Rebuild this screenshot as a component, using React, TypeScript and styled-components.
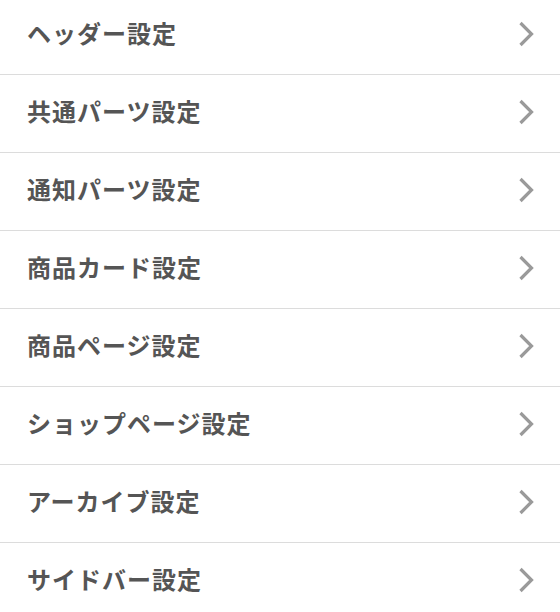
import React from 'react'
import styled, { createGlobalStyle } from 'styled-components'

const GlobalStyle = createGlobalStyle`
  html, body {
    margin: 0;
    padding: 0;
    background: #fff;
  }
  body {
    font-family: "Noto Sans CJK JP", "Noto Sans", sans-serif;
  }
`

const items = [
  'ヘッダー設定',
  '共通パーツ設定',
  '通知パーツ設定',
  '商品カード設定',
  '商品ページ設定',
  'ショップページ設定',
  'アーカイブ設定',
  'サイドバー設定',
]

const Menu = styled.ul`
  list-style: none;
  margin: -3px 0 0;
  padding: 0;
  width: 560px;
`

const Row = styled.li`
  display: flex;
  align-items: center;
  justify-content: space-between;
  height: 77px;
  padding: 0 26px 0 27px;
  border-bottom: 1px solid #dcdcdc;
  cursor: pointer;
`

const Label = styled.span`
  font-size: 24px;
  font-weight: 700;
  letter-spacing: 1px;
  color: #555;
  line-height: 1;
  margin-bottom: 6px;
`

const Arrow = styled.svg`
  display: block;
  margin-bottom: 3px;
`

const Chevron = () => (
  <Arrow width="16" height="26" viewBox="0 0 16 26" fill="none">
    <path d="M2.5 2 L13.5 13 L2.5 24" stroke="#9a9a9a" strokeWidth="3.2" strokeLinejoin="miter" />
  </Arrow>
)

export default function App() {
  return (
    <>
      <GlobalStyle />
      <Menu>
        {items.map((t) => (
          <Row key={t}>
            <Label>{t}</Label>
            <Chevron />
          </Row>
        ))}
      </Menu>
    </>
  )
}
